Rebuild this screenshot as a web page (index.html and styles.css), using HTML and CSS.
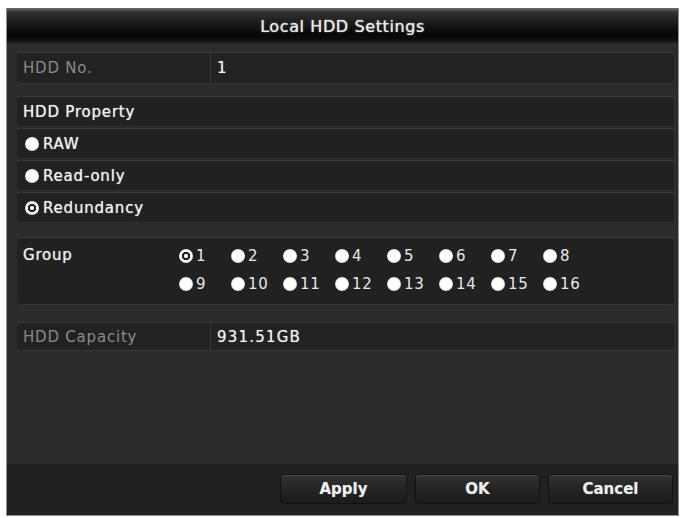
FILE: index.html
```html
<!DOCTYPE html>
<html>
<head>
<meta charset="utf-8">
<link rel="stylesheet" href="styles.css">
</head>
<body>
<div class="dialog">
  <div class="titlebar">Local HDD Settings</div>
  <div class="content">
    <div class="field">
      <div class="label dim">HDD No.</div>
      <div class="value">1</div>
    </div>
    <div class="prop">
      <div class="prow">HDD Property</div>
      <div class="prow"><span class="radio"></span>RAW</div>
      <div class="prow"><span class="radio"></span>Read-only</div>
      <div class="prow"><span class="radio on"></span>Redundancy</div>
    </div>
    <div class="group">
      <div class="glabel">Group</div>
      <div class="ggrid">
        <div class="gitem"><span class="radio on"></span>1</div>
        <div class="gitem"><span class="radio"></span>2</div>
        <div class="gitem"><span class="radio"></span>3</div>
        <div class="gitem"><span class="radio"></span>4</div>
        <div class="gitem"><span class="radio"></span>5</div>
        <div class="gitem"><span class="radio"></span>6</div>
        <div class="gitem"><span class="radio"></span>7</div>
        <div class="gitem"><span class="radio"></span>8</div>
        <div class="gitem"><span class="radio"></span>9</div>
        <div class="gitem"><span class="radio"></span>10</div>
        <div class="gitem"><span class="radio"></span>11</div>
        <div class="gitem"><span class="radio"></span>12</div>
        <div class="gitem"><span class="radio"></span>13</div>
        <div class="gitem"><span class="radio"></span>14</div>
        <div class="gitem"><span class="radio"></span>15</div>
        <div class="gitem"><span class="radio"></span>16</div>
      </div>
    </div>
    <div class="field cap">
      <div class="label dim">HDD Capacity</div>
      <div class="value">931.51GB</div>
    </div>
  </div>
  <div class="footer">
    <button class="btn w1">Apply</button>
    <button class="btn">OK</button>
    <button class="btn">Cancel</button>
  </div>
</div>
</body>
</html>
```
FILE: styles.css
```css
html, body {
  margin: 0;
  padding: 0;
  background: #ffffff;
}
body {
  font-family: "DejaVu Sans", "Liberation Sans", sans-serif;
  font-size: 15px;
  color: #e6e6e6;
}
.dialog {
  margin: 8px 0 0 6px;
  width: 671px;
  height: 506px;
  border: 1px solid #8e8e8e;
  border-top-color: #6a6a6a;
  background: #2c2c2c;
  display: flex;
  flex-direction: column;
}
.titlebar {
  height: 34px;
  flex: none;
  display: flex;
  align-items: center;
  justify-content: center;
  font-size: 16px;
  letter-spacing: 0.6px;
  color: #ececec;
  text-shadow: 0 0 1px rgba(255,255,255,0.7), 0 0 3px rgba(255,255,255,0.25);
  background: linear-gradient(to bottom, #5c5c5c 0, #333 3px, #1e1e1e 12px, #070707 24px, #0b0b0b 30px, #1e1e1e 34px);
}
.content {
  flex: 1;
  padding: 10px 4px 0 10px;
  display: flex;
  flex-direction: column;
}
.field {
  height: 30px;
  flex: none;
  display: flex;
  background: #222;
  border-radius: 3px;
  box-shadow: 0 -1px 0 #3a3a3a, 0 1px 0 #353535;
}
.field.cap {
  height: 27px;
  margin-top: 19px;
}
.label {
  width: 194px;
  padding-left: 6px;
  box-sizing: border-box;
  display: flex;
  align-items: center;
  border-right: 1px solid #3a3a3a;
  letter-spacing: 0.8px;
}
.dim {
  color: #8a8a8a;
}
.value {
  display: flex;
  align-items: center;
  padding-left: 6px;
  letter-spacing: 1.2px;
  color: #f0f0f0;
  text-shadow: 0 0 1px rgba(255,255,255,0.6);
}
.prop {
  margin-top: 14px;
  display: flex;
  flex-direction: column;
  gap: 3px;
}
.prow {
  height: 29px;
  background: #212121;
  border-radius: 3px;
  box-shadow: 0 -1px 0 #3a3a3a;
  display: flex;
  align-items: center;
  padding-left: 6px;
  letter-spacing: 0.8px;
  color: #f2f2f2;
  text-shadow: 0 0 1px rgba(255,255,255,0.7);
}
.prow .radio {
  margin-left: 2px;
  margin-right: 4px;
}
.radio {
  display: inline-block;
  width: 14px;
  height: 14px;
  border-radius: 50%;
  background: radial-gradient(circle closest-side, #fff 0 80%, #d4d4d4 100%);
  flex: none;
}
.radio.on {
  background: radial-gradient(circle closest-side, #fff 0 26%, #1e1e1e 34% 56%, #fff 64% 80%, #d4d4d4 100%);
}
.group {
  margin-top: 16px;
  height: 66px;
  box-sizing: border-box;
  padding-top: 4px;
  background: #212121;
  border-radius: 3px;
  box-shadow: 0 -1px 0 #3a3a3a, 0 1px 0 #353535;
  display: flex;
}
.glabel {
  width: 162px;
  box-sizing: border-box;
  padding-left: 6px;
  height: 26px;
  display: flex;
  align-items: center;
  letter-spacing: 0.8px;
  color: #f0f0f0;
  text-shadow: 0 0 1px rgba(255,255,255,0.7);
}
.ggrid {
  display: grid;
  grid-template-columns: repeat(8, 52px);
  grid-auto-rows: 28px;
}
.gitem {
  display: flex;
  align-items: center;
  gap: 3px;
  color: #e8e8e8;
  letter-spacing: 0.6px;
}
.footer {
  height: 51px;
  flex: none;
  background: #212121;
  box-sizing: border-box;
  padding: 10px 5px 0 0;
  display: flex;
  justify-content: flex-end;
  align-items: flex-start;
  gap: 8px;
}
.btn {
  width: 125px;
  height: 30px;
  border: 1px solid #121212;
  border-radius: 3px;
  background: linear-gradient(to bottom, #333 0, #262626 40%, #1b1b1b 100%);
  box-shadow: inset 0 1px 0 #474747;
  color: #efefef;
  font-family: "DejaVu Sans", "Liberation Sans", sans-serif;
  font-weight: bold;
  font-size: 15px;
  text-shadow: 0 0 1px rgba(255,255,255,0.4);
  padding: 0;
}
.btn.w1 {
  width: 127px;
}
```
